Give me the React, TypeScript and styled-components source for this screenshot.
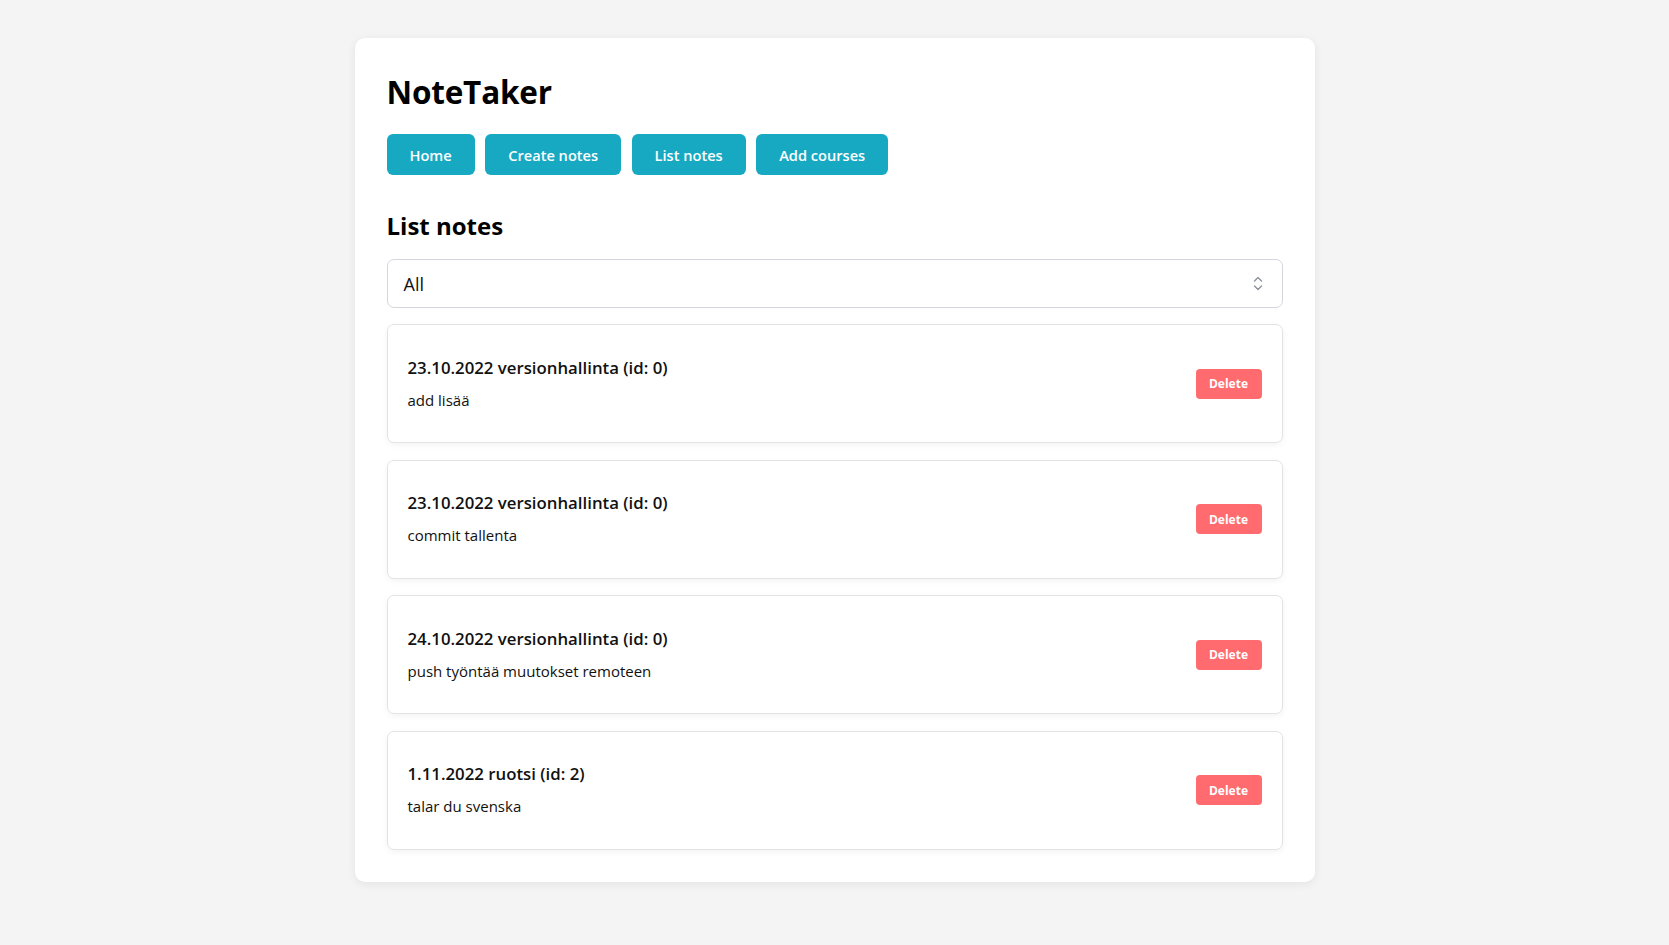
import styled, { createGlobalStyle } from 'styled-components';

type Note = {
  date: string;
  course: string;
  id: number;
  text: string;
};

const notes: Note[] = [
  { date: '23.10.2022', course: 'versionhallinta', id: 0, text: 'add lisää' },
  { date: '23.10.2022', course: 'versionhallinta', id: 0, text: 'commit tallenta' },
  { date: '24.10.2022', course: 'versionhallinta', id: 0, text: 'push työntää muutokset remoteen' },
  { date: '1.11.2022', course: 'ruotsi', id: 2, text: 'talar du svenska' },
];

const navItems = ['Home', 'Create notes', 'List notes', 'Add courses'];

const App = () => {
  return (
    <>
      <GlobalStyle />
      <Page>
        <Container>
          <Title>NoteTaker</Title>
          <Nav>
            {navItems.map((item) => (
              <NavButton key={item}>{item}</NavButton>
            ))}
          </Nav>
          <Heading>List notes</Heading>
          <SelectBox>
            <span>All</span>
            <svg width="10" height="15" viewBox="0 0 10 15" fill="none">
              <path d="M1.5 5L5 1.5L8.5 5" stroke="#8a8f98" strokeWidth="1.3" strokeLinecap="round" strokeLinejoin="round" />
              <path d="M1.5 10L5 13.5L8.5 10" stroke="#8a8f98" strokeWidth="1.3" strokeLinecap="round" strokeLinejoin="round" />
            </svg>
          </SelectBox>
          <NoteList>
            {notes.map((note, i) => (
              <NoteCard key={i}>
                <NoteBody>
                  <NoteTitle>
                    {note.date} {note.course} (id: {note.id})
                  </NoteTitle>
                  <NoteText>{note.text}</NoteText>
                </NoteBody>
                <DeleteButton>Delete</DeleteButton>
              </NoteCard>
            ))}
          </NoteList>
        </Container>
      </Page>
    </>
  );
};

export default App;

const GlobalStyle = createGlobalStyle`
  html, body {
    margin: 0;
    padding: 0;
    background-color: #f4f4f4;
    font-family: 'Open Sans', 'Noto Sans', sans-serif;
    color: #111;
  }
  * {
    box-sizing: border-box;
  }
`;

const Page = styled.div`
  min-height: 945px;
  padding-top: 38px;
`;

const Container = styled.div`
  width: 960px;
  margin: 0 auto;
  padding: 32px;
  background-color: white;
  border-radius: 10px;
  box-shadow: 0px 2px 10px rgba(0, 0, 0, 0.07);
`;

const Title = styled.h1`
  margin: 0;
  font-size: 31.5px;
  line-height: 44px;
  font-weight: 700;
  color: #000;
  letter-spacing: -0.2px;
`;

const Nav = styled.div`
  display: flex;
  gap: 10.5px;
  margin-top: 20px;
`;

const NavButton = styled.button`
  height: 41px;
  padding: 0 23px;
  border: none;
  border-radius: 6px;
  background-color: #17a9c2;
  color: white;
  font-family: inherit;
  font-size: 14.6px;
  font-weight: 600;
  cursor: pointer;
`;

const Heading = styled.h2`
  margin: 35px 0 17px;
  font-size: 24px;
  line-height: 32px;
  font-weight: 700;
  color: #000;
`;

const SelectBox = styled.div`
  display: flex;
  align-items: center;
  justify-content: space-between;
  height: 49px;
  padding: 0 19px 0 16px;
  border: 1px solid #d4d6dc;
  border-radius: 7px;
  font-size: 18px;
  color: #111;
`;

const NoteList = styled.div`
  display: flex;
  flex-direction: column;
  gap: 16.5px;
  margin-top: 16px;
`;

const NoteCard = styled.div`
  display: flex;
  align-items: center;
  justify-content: space-between;
  height: 119px;
  padding: 0 20px;
  border: 1px solid #e2e3e6;
  border-radius: 7px;
  box-shadow: 0px 2px 6px rgba(0, 0, 0, 0.05);
`;

const NoteBody = styled.div`
  display: flex;
  flex-direction: column;
  gap: 9px;
  padding-bottom: 1px;
`;

const NoteTitle = styled.div`
  font-size: 16.8px;
  line-height: 24px;
  font-weight: 600;
  color: #111;
`;

const NoteText = styled.div`
  font-size: 15px;
  line-height: 22px;
  color: #111;
`;

const DeleteButton = styled.button`
  width: 66px;
  height: 30px;
  border: none;
  border-radius: 4px;
  background-color: #ff6b6e;
  color: white;
  font-family: inherit;
  font-size: 12px;
  font-weight: 700;
  cursor: pointer;
`;
